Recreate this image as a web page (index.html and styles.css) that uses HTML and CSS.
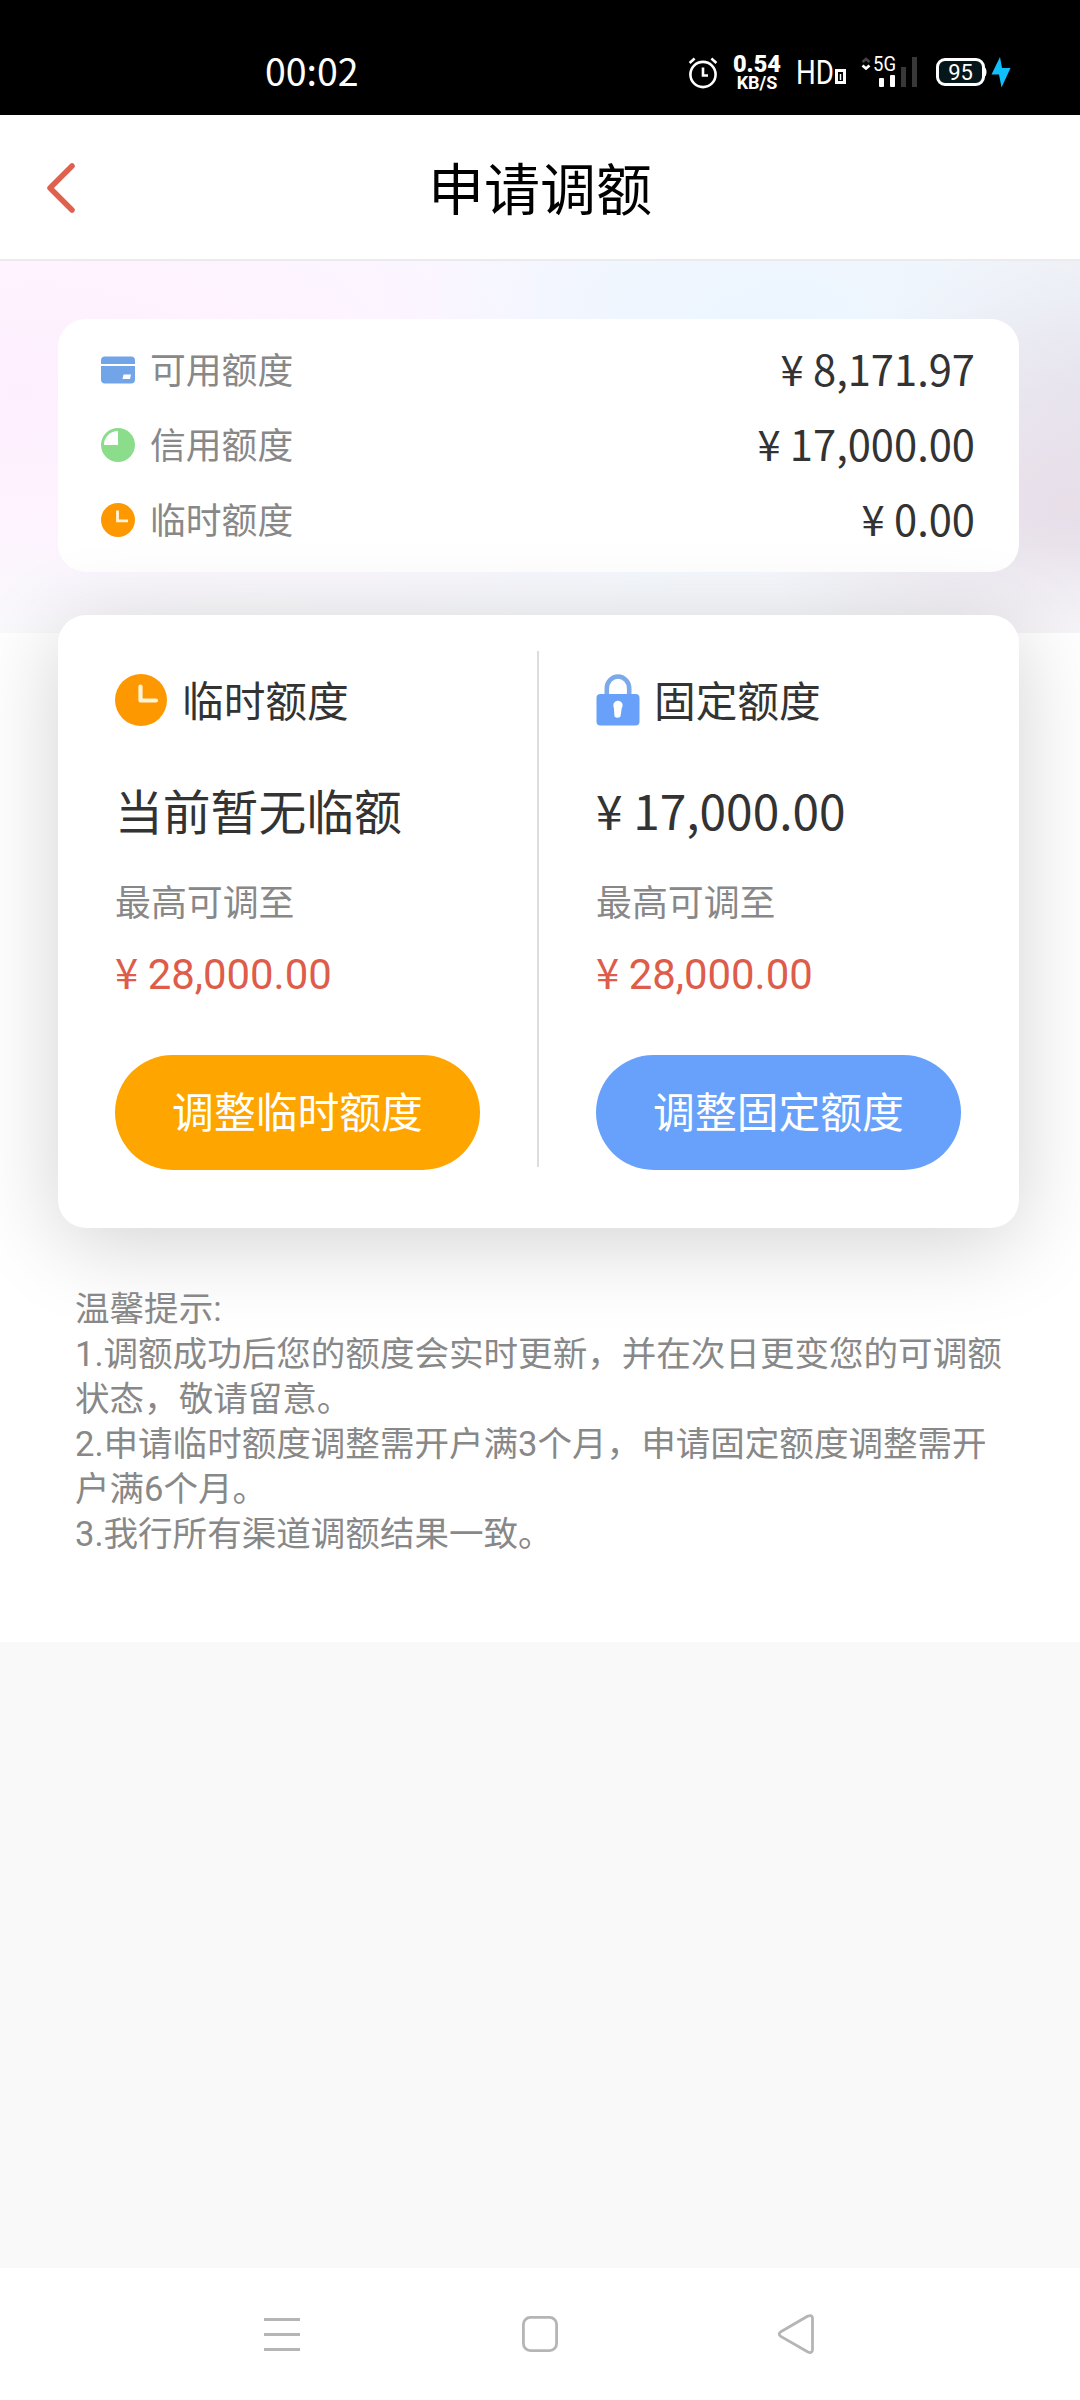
FILE: index.html
```html
<!DOCTYPE html>
<html lang="zh-CN">
<head>
<meta charset="utf-8">
<title>申请调额</title>
<link rel="stylesheet" href="styles.css">
</head>
<body>
<div class="statusbar">
  <span class="clock">00:02</span>
  <div class="status-icons">
    <svg class="i-alarm" width="30" height="34" viewBox="0 0 30 34" fill="none" stroke="#fff" stroke-width="2.6"><circle cx="15" cy="19.5" r="12.6"/><path d="M15 12.5v8h5M1.6 8l5-4.4M28.4 8l-5-4.4"/></svg>
    <div class="netspeed"><b>0.54</b><small>KB/S</small></div>
    <svg class="i-hd" width="54" height="46" viewBox="-4 -8 54 46"><text x="-2" y="25.500" font-size="34" textLength="38" lengthAdjust="spacingAndGlyphs" fill="#fff">HD</text><path d="M38.500 12.500h8v12h-8z" fill="none" stroke="#fff" stroke-width="3"/><path d="M42.500 16v6" stroke="#fff" stroke-width="1.500"/></svg>
    <svg class="i-signal" width="58" height="38" viewBox="0 -6 58 38"><path d="M1.500 6l3.500-3 3.500 3" stroke="#444" stroke-width="2.500" fill="none"/><path d="M1.500 9.500l3.500 3 3.500-3" stroke="#fff" stroke-width="2.800" fill="none"/><text x="12" y="14.500" font-size="19.500" textLength="23" lengthAdjust="spacingAndGlyphs" fill="#fff">5G</text><rect x="18" y="22" width="5" height="9" rx="1" fill="#fff"/><rect x="29" y="19" width="5" height="12" rx="1" fill="#fff"/><rect x="40" y="11" width="5" height="20" fill="#383838"/><rect x="51" y="1" width="5" height="30" fill="#383838"/></svg>
    <svg class="i-battery" width="51" height="28" viewBox="0 0 51 28"><rect x="1.500" y="1.500" width="46" height="25" rx="7.500" fill="#06171c" stroke="#fff" stroke-width="3"/><path d="M48 8.500q2.500 1.500 2.500 5.500t-2.500 5.500z" fill="#fff"/><text x="24.500" y="21.500" text-anchor="middle" font-size="22" fill="#fff">95</text></svg>
    <svg class="i-bolt" width="20" height="31" viewBox="0 0 20 31"><path d="M9 0L0.500 17.500h7.500L10.500 30.500 19.500 11h-8.500z" fill="#0fc0ff"/></svg>
  </div>
</div>
<header class="titlebar">
  <svg class="back" width="34" height="54" viewBox="0 0 34 54" fill="none" stroke="#e0604f" stroke-width="5.500" stroke-linecap="round" stroke-linejoin="round"><path d="M27 5L5 27 27 49"/></svg>
  <h1>申请调额</h1>
</header>
<main class="page">
  <section class="hero">
    <div class="summary">
      <div class="row"><svg width="34" height="34" viewBox="0 0 34 34"><rect y="3.500" width="34" height="27" rx="4" fill="#72a5e8"/><path d="M0 12h34" stroke="#fff" stroke-width="2"/><path d="M22.500 21.500h7.500l-1 4.500h-7.500z" fill="#fff"/></svg><span class="label">可用额度</span><span class="value">¥ 8,171.97</span></div>
      <div class="row"><svg width="34" height="34" viewBox="0 0 34 34"><circle cx="17" cy="17" r="17" fill="#8bdd8b"/><path d="M17 3v14H3A14 14 0 0 1 17 3z" fill="#fff"/></svg><span class="label">信用额度</span><span class="value">¥ 17,000.00</span></div>
      <div class="row"><svg width="34" height="34" viewBox="0 0 34 34"><circle cx="17" cy="17" r="17" fill="#fe9800"/><path d="M16.500 7.500v10.300H27" fill="none" stroke="#fff3d8" stroke-width="2.800"/></svg><span class="label">临时额度</span><span class="value">¥ 0.00</span></div>
    </div>
  </section>
  <section class="limits">
    <div class="limit">
      <h2><svg class="clock-icon" width="52" height="52" viewBox="0 0 52 52"><circle cx="26" cy="26" r="26" fill="#fe9800"/><path d="M25.500 12.500v14h15.500" fill="none" stroke="#fff3d8" stroke-width="4.200" stroke-linecap="round" stroke-linejoin="round"/></svg><span>临时额度</span></h2>
      <p class="current">当前暂无临额</p>
      <p class="hint">最高可调至</p>
      <p class="max"><span class="yen">¥ </span>28,000.00</p>
      <button class="btn btn-temp">调整临时额度</button>
    </div>
    <div class="divider"></div>
    <div class="limit">
      <h2><svg class="lock-icon" width="44" height="52" viewBox="0 0 44 52"><path d="M10.800 20v-5.500a11.200 12 0 0 1 22.400 0V20" fill="none" stroke="#7ba9ea" stroke-width="4.600"/><rect x="0.500" y="20" width="43" height="31.500" rx="4" fill="#68a0fa"/><path d="M17.300 31.800a4.700 4.700 0 1 1 8.400 2.500l-1.200 8.200q-3 2.600-6 0l-.6-8.200z" fill="#fff"/></svg><span>固定额度</span></h2>
      <p class="current money">¥ 17,000.00</p>
      <p class="hint">最高可调至</p>
      <p class="max"><span class="yen">¥ </span>28,000.00</p>
      <button class="btn btn-fixed">调整固定额度</button>
    </div>
  </section>
  <section class="notes">
    <p>温馨提示:</p>
    <p>1.调额成功后您的额度会实时更新，并在次日更变您的可调额<br>状态，敬请留意。</p>
    <p>2.申请临时额度调整需开户满3个月，申请固定额度调整需开<br>户满6个月。</p>
    <p>3.我行所有渠道调额结果一致。</p>
  </section>
</main>
<nav class="navbar">
  <svg width="40" height="44" viewBox="0 0 40 44" fill="none" stroke="#b5b5b5" stroke-width="3"><path d="M2 7.500h36M2 22.500h36M2 37.500h36"/></svg>
  <svg width="40" height="44" viewBox="0 0 40 44" fill="none" stroke="#b5b5b5" stroke-width="2.800"><rect x="4.400" y="5.400" width="33.200" height="33.200" rx="7"/></svg>
  <svg width="40" height="44" viewBox="0 0 40 44" fill="none" stroke="#b5b5b5" stroke-width="2.800" stroke-linejoin="round"><path d="M31.500 4.300L4.800 19.800Q1.600 22 4.800 24.400L31.500 39.800Q36.500 42 36.500 37.500V6.600Q36.500 2 31.500 4.300z"/></svg>
</nav>
</body>
</html>
```
FILE: styles.css
```css
* { box-sizing: border-box; margin: 0; padding: 0; }

body {
  width: 1080px;
  height: 2400px;
  display: flex;
  flex-direction: column;
  background: #f9f9f9;
  color: #333;
  font-family: "Noto Sans CJK SC", sans-serif;
  white-space: nowrap;
  overflow: hidden;
}

svg { display: block; flex: none; }
h1, h2 { font-weight: 400; }

.statusbar {
  height: 115px;
  flex: none;
  display: flex;
  justify-content: space-between;
  padding: 0 69px 0 265px;
  background: #000;
  color: #fff;
}
.clock { font-size: 37.5px; line-height: 50px; margin-top: 45px; }
.status-icons { display: flex; align-items: flex-start; margin-top: 50px; font-family: Roboto, sans-serif; }
.i-alarm { margin: 5px 15px 0 0; }
.netspeed { width: 48px; display: flex; flex-direction: column; align-items: center; font-weight: 700; margin-right: 13px; }
.netspeed b { font-size: 23.5px; line-height: 24px; margin-top: 2px; }
.netspeed small { font-size: 18px; line-height: 18px; margin-top: -2px; }
.i-hd { margin-right: 13px; }
.i-signal { margin-right: 17px; }
.i-battery { margin: 8px 4px 0 0; }
.i-bolt { margin-top: 7px; }

.titlebar {
  height: 146px;
  flex: none;
  display: grid;
  grid-template-columns: 1fr auto 1fr;
  align-items: center;
  padding: 0 45px;
  background: #fff;
  border-bottom: 2px solid #ebebee;
  color: #000;
}
.back { margin-top: 1px; }
.titlebar h1 { font-size: 56px; line-height: 80px; margin-top: -3px; }

.page { height: 1381px; flex: none; background: #fff; overflow: hidden; }

.hero {
  height: 372px;
  padding: 58px 61px 0 58px;
  background:
    linear-gradient(0deg, rgba(253, 250, 251, .5), rgba(255, 255, 255, 0) 90px),
    radial-gradient(ellipse 330px 210px at 1075px 245px, #e7dee8 0%, rgba(231, 222, 232, 0) 100%),
    radial-gradient(ellipse 260px 190px at 1120px 140px, #e6e6f0 0%, rgba(230, 230, 240, 0) 100%),
    radial-gradient(ellipse 330px 150px at 770px 55px, #ecf5ff 0%, rgba(236, 245, 255, 0) 100%),
    radial-gradient(ellipse 520px 260px at 20px 130px, #feefff 0%, rgba(254, 239, 255, 0) 100%),
    linear-gradient(0deg, rgba(244, 249, 252, .9), rgba(244, 249, 252, 0) 120px),
    linear-gradient(90deg, #fef7fe, #fcf6ff 35%, #f3f7fe 60%, #f2f4f9);
}
.summary {
  height: 253px;
  padding: 12px 44px 0 43px;
  border-radius: 28px;
  background: #fff;
}
.row { height: 75px; display: flex; align-items: center; }
.row svg { margin-top: 3px; }
.label { flex: 1; margin: -2px 0 0 15px; font-size: 35.8px; line-height: 48px; color: #888; }
.value { font-size: 41.7px; line-height: 60px; margin-top: -1px; }

.limits {
  position: relative;
  height: 613px;
  margin: -18px 61px 0 58px;
  padding: 36px 58px 58px 57px;
  display: flex;
  justify-content: space-between;
  border-radius: 28px;
  background: #fff;
  box-shadow: 0 14px 88px rgba(0, 0, 0, .18);
}
.divider { width: 2px; height: 516px; background: #ddd; }
.limit { width: 365px; padding-top: 22px; }
.limit h2 { height: 54px; display: flex; align-items: center; font-size: 41.7px; line-height: 54px; }
.limit h2 span { margin-top: -3px; }
.clock-icon { margin-right: 15px; }
.lock-icon { margin-right: 14px; }
.current { margin-top: 48px; height: 70px; font-size: 47.8px; line-height: 70px; }
.hint { margin-top: 30px; height: 50px; font-size: 35.9px; line-height: 50px; color: #888; }
.max { margin-top: 19px; height: 54px; font-family: Roboto, sans-serif; font-size: 41.9px; line-height: 54px; color: #dd5c4a; }
.yen { font-family: "Noto Sans CJK SC", sans-serif; }
.btn {
  display: block;
  width: 365px;
  height: 115px;
  margin-top: 57px;
  padding-bottom: 6px;
  border: 0;
  border-radius: 58px;
  color: #fff;
  font: 400 41.8px/60px "Noto Sans CJK SC", sans-serif;
}
.btn-temp { background: #ffa500; }
.btn-fixed { background: #68a1fb; }

.notes {
  position: relative;
  padding: 59px 0 0 75px;
  font-family: Roboto, "Noto Sans CJK SC", sans-serif;
  font-size: 34.55px;
  line-height: 45px;
  color: #888;
}

.navbar {
  height: 132px;
  flex: none;
  margin-top: auto;
  display: flex;
  justify-content: space-between;
  align-items: center;
  padding: 0 264px 0 262px;
  background: #fff;
}
```
